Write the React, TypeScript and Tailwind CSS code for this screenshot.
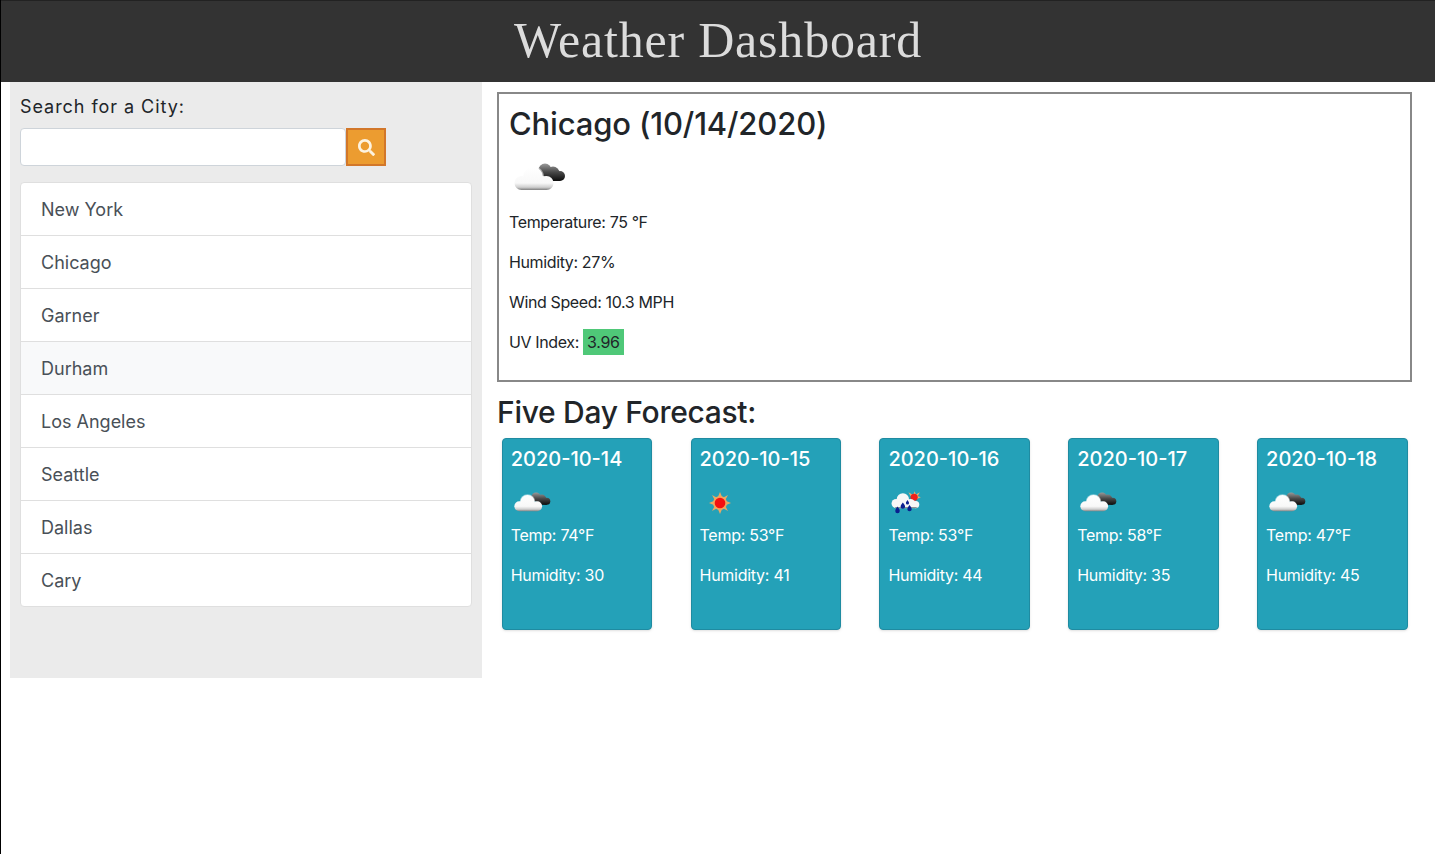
import { FaSearch } from 'react-icons/fa';

const cities = ['New York', 'Chicago', 'Garner', 'Durham', 'Los Angeles', 'Seattle', 'Dallas', 'Cary'];

const forecast = [
  { date: '2020-10-14', icon: 'cloud', temp: 74, humidity: 30 },
  { date: '2020-10-15', icon: 'sun', temp: 53, humidity: 41 },
  { date: '2020-10-16', icon: 'rain', temp: 53, humidity: 44 },
  { date: '2020-10-17', icon: 'cloud', temp: 58, humidity: 35 },
  { date: '2020-10-18', icon: 'cloud', temp: 47, humidity: 45 },
];

function CloudIcon({ id, className }: { id: string; className: string }) {
  return (
    <svg viewBox="0 0 52 30" className={className}>
      <defs>
        <linearGradient id={`${id}-white`} gradientUnits="userSpaceOnUse" x1="0" y1="5" x2="0" y2="28">
          <stop offset="0" stopColor="#ffffff" />
          <stop offset="0.7" stopColor="#f8f8f8" />
          <stop offset="0.88" stopColor="#cfcfcf" />
          <stop offset="1" stopColor="#7f7f7f" />
        </linearGradient>
        <linearGradient id={`${id}-dark`} gradientUnits="userSpaceOnUse" x1="0" y1="1" x2="0" y2="19">
          <stop offset="0" stopColor="#a0a0a0" />
          <stop offset="0.5" stopColor="#4a4a4a" />
          <stop offset="1" stopColor="#0c0c0c" />
        </linearGradient>
      </defs>
      <g fill={`url(#${id}-dark)`}>
        <circle cx="31" cy="8" r="6.500" />
        <circle cx="39" cy="11" r="6.500" />
        <circle cx="46" cy="14" r="5" />
        <rect x="32" y="12" width="14" height="7" />
      </g>
      <circle cx="19" cy="15" r="11" fill="#ffffff" opacity="0.5" />
      <g fill={`url(#${id}-white)`}>
        <circle cx="7.500" cy="21" r="7" />
        <circle cx="19" cy="15" r="10" />
        <circle cx="32.500" cy="21" r="7" />
        <rect x="7.500" y="18" width="25" height="10" />
      </g>
    </svg>
  );
}

function SunIcon() {
  return (
    <svg viewBox="0 0 36 24" className="ml-[2px] h-[24px] w-9">
      <g fill="#eaa864">
        <polygon points="18,1 20.500,7 15.500,7" />
        <polygon points="18,23 20.500,17 15.500,17" />
        <polygon points="7,12 13,9.500 13,14.500" />
        <polygon points="29,12 23,9.500 23,14.500" />
        <polygon points="10,4 15.500,7 13,9.500" />
        <polygon points="26,4 20.500,7 23,9.500" />
        <polygon points="10,20 15.500,17 13,14.500" />
        <polygon points="26,20 20.500,17 23,14.500" />
      </g>
      <circle cx="18" cy="12" r="7" fill="#f2a55c" />
      <circle cx="18" cy="12" r="5.300" fill="#f50f0f" />
    </svg>
  );
}

function RainIcon() {
  return (
    <svg viewBox="0 0 36 24" className="ml-[2px] h-[25px] w-[37px]">
      <g fill="#e8b070">
        <polygon points="24,0 25.500,4 22.500,4" />
        <polygon points="30,6 26,4.500 26,7.500" />
        <polygon points="18,1 22,3.500 20,5" />
        <polygon points="29,1 25,3.500 27,5" />
      </g>
      <circle cx="23.500" cy="6" r="3.500" fill="#f0201a" />
      <g fill="#f7f7f7">
        <circle cx="6" cy="12" r="4.500" />
        <circle cx="12.500" cy="8" r="6" />
        <circle cx="20" cy="12" r="4.500" />
        <rect x="6" y="10" width="20" height="6.500" />
        <circle cx="25" cy="13" r="3.500" />
      </g>
      <rect x="5" y="15.500" width="21" height="1" fill="#8a8a8a" />
      <g fill="#0a1f8f">
        <path d="M7.300 15c1.300 1.800 2.200 3 2.200 4.300a2.200 2.200 0 0 1-4.400 0c0-1.300.9-2.500 2.200-4.300z" />
        <path d="M12.500 11c1.300 1.700 2.200 2.800 2.200 4a2.200 2.200 0 0 1-4.400 0c0-1.200.9-2.300 2.200-4z" />
        <path d="M17 8.500c.9 1.300 1.500 2 1.500 2.900a1.500 1.500 0 0 1-3 0c0-.9.600-1.600 1.500-2.900z" />
        <path d="M19 13.500c1.300 1.700 2.100 2.800 2.100 4a2.100 2.100 0 0 1-4.200 0c0-1.200.8-2.300 2.100-4z" />
      </g>
    </svg>
  );
}

function ForecastCard({ date, icon, temp, humidity }: (typeof forecast)[number]) {
  return (
    <div className="h-[192px] w-[150.6px] rounded border border-[#1f8ba1] bg-[#24a1b8] px-2 pt-[6px] text-white shadow-sm">
      <div className="text-[20px] leading-[28px] font-medium">{date}</div>
      <div className="mt-[18px] h-[23px]">
        {icon === 'cloud' && <CloudIcon id={date} className="ml-[3px] h-[22px] w-[37px]" />}
        {icon === 'sun' && <SunIcon />}
        {icon === 'rain' && <RainIcon />}
      </div>
      <p className="mt-[9px] text-base leading-6 tracking-[-0.27px]">Temp: {temp}°F</p>
      <p className="mt-4 text-base leading-6 tracking-[-0.27px]">Humidity: {humidity}</p>
    </div>
  );
}

export default function App() {
  return (
    <div className="min-h-[854px] border-l border-black bg-white font-['Inter',sans-serif] text-[#212529]">
      {/* Header */}
      <header className="flex h-[82px] items-center justify-center border-t border-[#222222] bg-[#333333] pb-[4px]">
        <h1 className="font-['Liberation_Serif',serif] text-[50px] leading-none tracking-[0.8px] text-[#dcdcdc]">
          Weather Dashboard
        </h1>
      </header>

      <div className="flex items-start">
        {/* Sidebar */}
        <aside className="ml-[9px] h-[596px] w-[472px] bg-[#ebebeb] p-[10px]">
          <label className="block pt-[2px] text-[18px] leading-[25px] tracking-[0.95px]">Search for a City:</label>
          <div className="mt-[9px] flex">
            <input className="h-[38px] w-[326px] rounded border border-[#ced4da] bg-white" />
            <button className="flex h-[38px] w-10 items-center justify-center border-2 border-[#d2772a] bg-[#ec9c30] text-[#fdf3e0]">
              <FaSearch size={17} />
            </button>
          </div>
          <ul className="mt-4 overflow-hidden rounded border border-[#dfdfdf] bg-white">
            {cities.map((city) => (
              <li
                key={city}
                className={`flex h-[53px] items-center border-b border-[#dfdfdf] px-5 text-[18px] text-[#495057] last:h-[52px] last:border-b-0 ${
                  city === 'Durham' ? 'bg-[#f8f9fa]' : ''
                }`}
              >
                {city}
              </li>
            ))}
          </ul>
        </aside>

        {/* Main */}
        <main className="ml-[15px] w-[915px] pt-[10px]">
          <section className="h-[290px] border-2 border-[#888888] px-[10px] pt-[9px]">
            <h2 className="text-[31px] leading-[42px] font-medium tracking-[-0.15px]">Chicago (10/14/2020)</h2>
            <CloudIcon id="today" className="mt-[17px] ml-[5px] h-[30px] w-[52px]" />
            <p className="mt-[18px] text-base leading-6 tracking-[-0.37px]">Temperature: 75 °F</p>
            <p className="mt-4 text-base leading-6 tracking-[-0.37px]">Humidity: 27%</p>
            <p className="mt-4 text-base leading-6 tracking-[-0.37px]">Wind Speed: 10.3 MPH</p>
            <p className="mt-4 text-base leading-6 tracking-[-0.37px]">
              UV Index: <span className="bg-[#4fc878] px-1 py-[3px]">3.96</span>
            </p>
          </section>

          <h2 className="mt-[12px] text-[30px] leading-[37px] font-medium tracking-[-0.3px]">Five Day Forecast:</h2>
          <div className="mt-[7px] ml-[4.7px] flex w-[906px] justify-between">
            {forecast.map((day) => (
              <ForecastCard key={day.date} {...day} />
            ))}
          </div>
        </main>
      </div>
    </div>
  );
}
